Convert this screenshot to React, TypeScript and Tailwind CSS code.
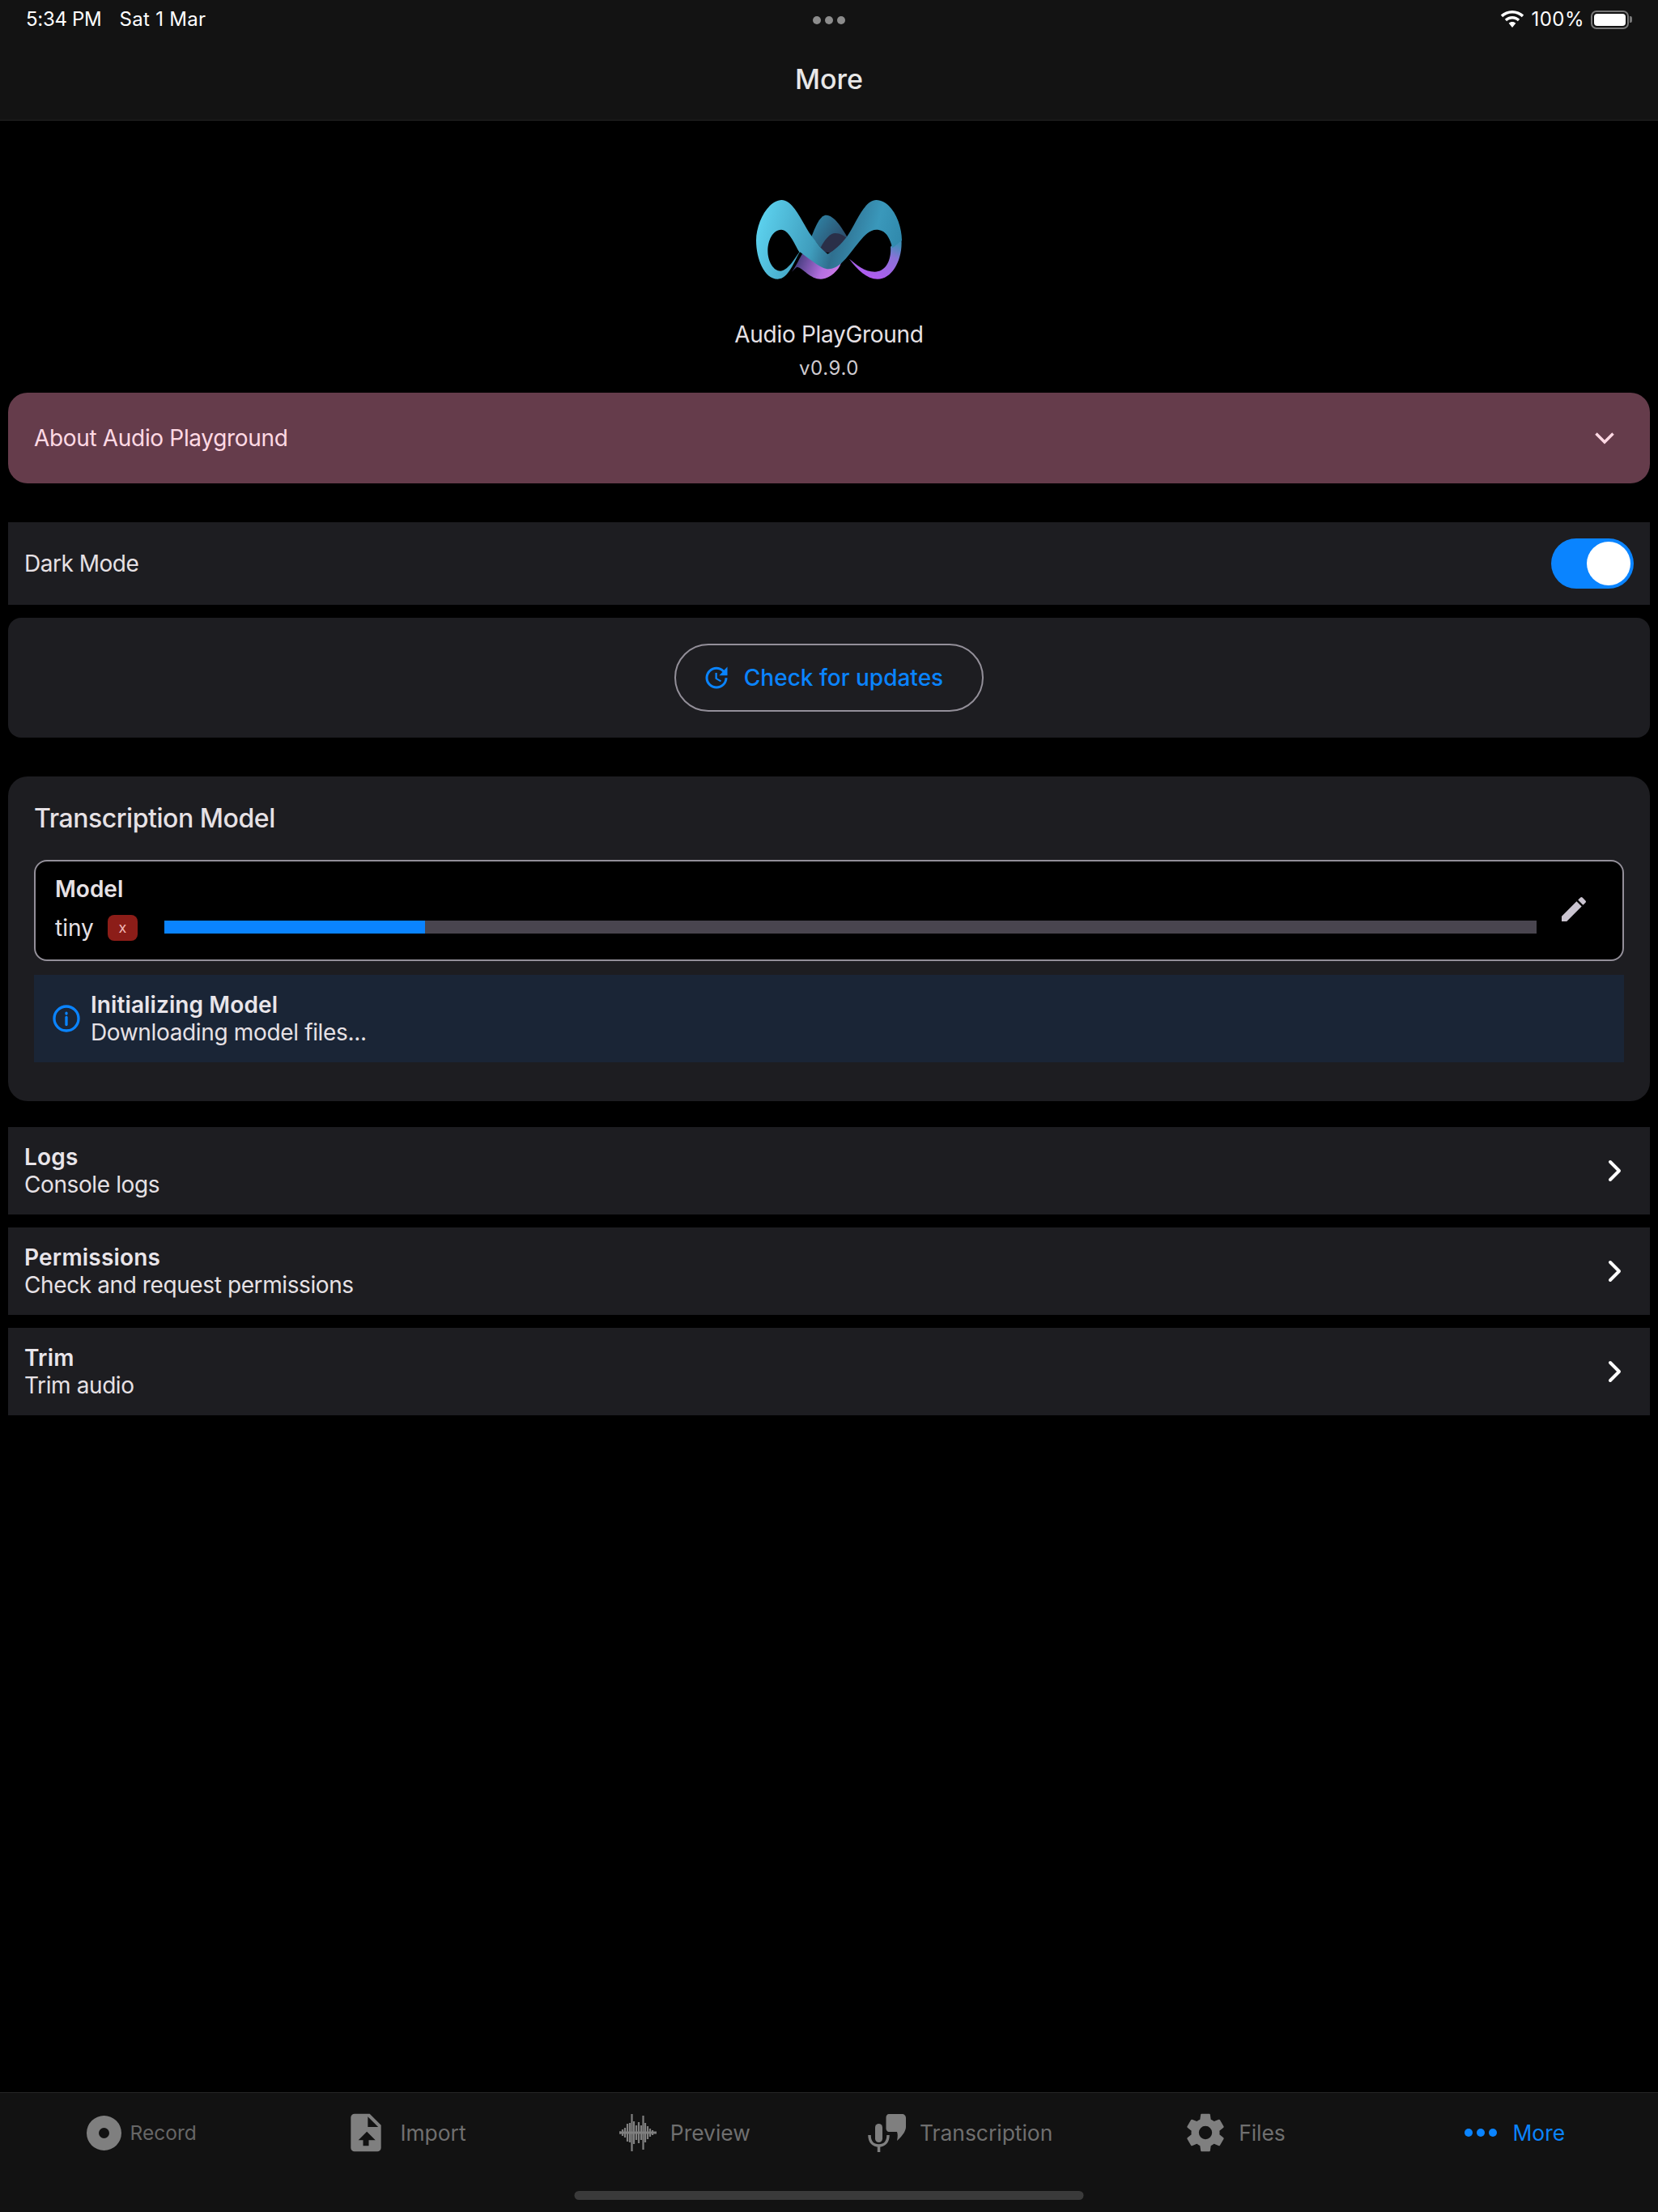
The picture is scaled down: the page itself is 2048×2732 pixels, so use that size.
import React from "react";

const font = { fontFamily: "Inter, 'Noto Sans', sans-serif" };

function Logo() {
  return (
    <svg width="180" height="98" viewBox="210 112 540 294" className="block">
      <defs>
        <linearGradient id="lg1" x1="210" y1="150" x2="750" y2="300" gradientUnits="userSpaceOnUse">
          <stop offset="0" stopColor="#5fd6f2" />
          <stop offset="0.42" stopColor="#3f9dbd" />
          <stop offset="0.56" stopColor="#2f6f8f" />
          <stop offset="0.8" stopColor="#3a98bb" />
          <stop offset="1" stopColor="#2f87aa" />
        </linearGradient>
        <linearGradient id="lg2" x1="360" y1="320" x2="560" y2="400" gradientUnits="userSpaceOnUse">
          <stop offset="0" stopColor="#3e3a78" />
          <stop offset="0.5" stopColor="#b56fe0" />
          <stop offset="1" stopColor="#e083ee" />
        </linearGradient>
        <linearGradient id="lg3" x1="700" y1="260" x2="640" y2="400" gradientUnits="userSpaceOnUse">
          <stop offset="0" stopColor="#3f8fb8" />
          <stop offset="0.35" stopColor="#8a72d8" />
          <stop offset="1" stopColor="#b05cf0" />
        </linearGradient>
        <linearGradient id="lg4" x1="420" y1="180" x2="540" y2="260" gradientUnits="userSpaceOnUse">
          <stop offset="0" stopColor="#2f86a8" />
          <stop offset="1" stopColor="#2c4a68" />
        </linearGradient>
      </defs>
      <path d="M415 248C432 205 448 168 470 168C498 168 528 215 548 250L500 300L450 290Z" fill="url(#lg4)" />
      <path d="M447 292C462 262 482 235 503 235C522 235 536 245 546 254L500 310L460 305Z" fill="#2a2f48" />
      <path d="M342 378C358 358 372 325 385 305L470 350L525 345C515 375 480 405 450 405C410 405 385 365 362 360C356 362 350 372 342 378Z" fill="url(#lg2)" />
      <path d="M555 330C580 350 610 378 650 378C690 378 712 335 708 285L748 255C755 330 715 405 660 405C620 405 585 370 555 330Z" fill="url(#lg3)" />
      <path fillRule="evenodd" d="M305 112C350 112 385 205 415 245C435 270 450 295 475 312C500 300 525 275 545 250C580 200 610 112 655 112C710 112 750 195 750 262L715 290C705 250 690 222 655 222C610 222 575 300 525 347C505 365 480 375 455 362C425 347 395 320 372 305C350 340 330 405 290 405C240 405 210 330 210 262C210 195 255 112 305 112ZM303 222C270 222 253 265 253 300C253 340 275 375 300 375C325 375 350 335 370 305C350 270 330 222 303 222Z" fill="url(#lg1)" />
    </svg>
  );
}

function Row({ title, sub }: { title: string; sub: string }) {
  return (
    <div className="flex h-[108px] items-center justify-between bg-[#1d1d21] pl-[20px] pr-[28px]">
      <div className="flex flex-col">
        <span className="text-[28px] font-semibold leading-[34px] tracking-[0.2px] text-[#e9e5ea]">{title}</span>
        <span className="text-[28px] leading-[34px] tracking-[-0.4px] text-[#e6e1e5]">{sub}</span>
      </div>
      <svg width="32" height="32" viewBox="0 0 32 32" fill="none" stroke="#ffffff" strokeWidth="4" strokeLinecap="round" strokeLinejoin="round">
        <path d="M11 5L22 16L11 27" />
      </svg>
    </div>
  );
}

function Tab({ icon, label, active, dim, ml }: { icon: React.ReactNode; label: string; active?: boolean; dim?: boolean; ml: string }) {
  return (
    <div className={`flex w-[341.33px] shrink-0 items-center justify-center pb-[4px] ${ml}`}>
      {icon}
      <span className={`leading-[32px] ${active ? "text-[26.4px] text-[#0a84ff]" : dim ? "text-[24.5px] text-[#666666]" : "text-[26.4px] text-[#6f6f6f]"}`}>{label}</span>
    </div>
  );
}

const waveBars: [number, number][] = [
  [1, 3], [4, 8], [7, 12], [10, 22], [13, 24], [15.5, 46], [18, 28], [21, 18], [24, 26], [27, 18], [29.5, 42], [32, 24], [35, 16], [38, 10], [41, 6], [44, 2],
];

export default function App() {
  return (
    <div style={font} className="flex h-[2732px] w-[2048px] flex-col overflow-hidden bg-black text-white">
      <header className="relative h-[149px] shrink-0 border-b border-[#242424] bg-[#131313]">
        <div className="flex h-[48px] items-center justify-between pl-[32px] pr-[32px]">
          <div className="flex gap-[22px] text-[24px] leading-[28px] text-white">
            <span className="tracking-[-0.3px]">5:34 PM</span>
            <span className="tracking-[0.3px]">Sat 1 Mar</span>
          </div>
          <div className="flex items-center gap-[8px]">
            <svg width="30" height="22" viewBox="0 0 30 22" fill="#fff">
              <path d="M15 0C9.5 0 4.5 2.1 0.8 5.6L3.2 8.2C6.3 5.3 10.4 3.5 15 3.5S23.7 5.3 26.8 8.2L29.2 5.6C25.5 2.1 20.5 0 15 0Z" />
              <path d="M15 7C11.4 7 8.2 8.4 5.8 10.7L8.2 13.2C9.9 11.5 12.3 10.5 15 10.5S20.1 11.5 21.8 13.2L24.2 10.7C21.8 8.4 18.6 7 15 7Z" />
              <path d="M15 14C13.3 14 11.8 14.7 10.7 15.7L15 21L19.3 15.7C18.2 14.7 16.7 14 15 14Z" />
            </svg>
            <span className="text-[24px] leading-[28px] tracking-[0.5px] text-white">100%</span>
            <div className="flex items-center">
              <div className="h-[23px] w-[47px] rounded-[7px] border-2 border-[#777777] p-[2px]">
                <div className="h-full w-full rounded-[4px] bg-white" />
              </div>
              <div className="ml-[1px] h-[8px] w-[3px] rounded-r-[2px] bg-[#777777]" />
            </div>
          </div>
        </div>
        <div className="absolute left-1/2 top-[20px] flex -translate-x-1/2 gap-[5px]">
          <div className="h-[10px] w-[10px] rounded-full bg-[#8c8c8c]" />
          <div className="h-[10px] w-[10px] rounded-full bg-[#8c8c8c]" />
          <div className="h-[10px] w-[10px] rounded-full bg-[#8c8c8c]" />
        </div>
        <div className="mt-[30px] text-center text-[34px] font-medium leading-[40px] text-[#e8e8e8]">More</div>
      </header>

      <main className="flex flex-1 flex-col px-[10px]">
        <div className="flex flex-col items-center pt-[98px]">
          <Logo />
          <div className="mt-[50px] text-[28px] leading-[36px] tracking-[-0.3px] text-[#e6e1e5]">Audio PlayGround</div>
          <div className="mt-[6px] text-[24px] leading-[36px] tracking-[0.6px] text-[#cfcbd0]">v0.9.0</div>
        </div>

        <div className="mt-[12px] flex h-[112px] items-center justify-between rounded-[24px] bg-[#653c4b] pl-[32px] pr-[44px]">
          <span className="text-[28px] tracking-[-0.33px] text-[#ffd9e4]">About Audio Playground</span>
          <svg width="24" height="16" viewBox="0 0 24 16" fill="none" stroke="#ffd9e4" strokeWidth="3.5">
            <path d="M1.5 2.5L12 13L22.5 2.5" />
          </svg>
        </div>

        <div className="mt-[48px] flex h-[102px] items-center justify-between bg-[#1d1d21] pl-[20px] pr-[20px]">
          <span className="text-[28px] tracking-[-0.5px] text-[#e6e1e5]">Dark Mode</span>
          <div className="flex h-[62px] w-[102px] items-center justify-end rounded-full bg-[#0a84ff] pr-[4px]">
            <div className="h-[54px] w-[54px] rounded-full bg-white" />
          </div>
        </div>

        <div className="mt-[16px] flex h-[148px] items-center justify-center rounded-[16px] bg-[#1d1d21]">
          <div className="flex h-[84px] w-[382px] items-center justify-center gap-[16px] rounded-full border-2 border-[#938f99] pr-[16px]">
            <svg width="36" height="36" viewBox="0 0 24 24" fill="#0a84ff">
              <path d="M21,10.12H14.22L16.96,7.3C14.23,4.6 9.81,4.5 7.08,7.2C4.35,9.91 4.35,14.28 7.08,17C9.81,19.7 14.23,19.7 16.96,17C18.32,15.65 19,14.08 19,12.1H21C21,14.08 20.12,16.65 18.36,18.39C14.85,21.87 9.15,21.87 5.64,18.39C2.14,14.92 2.11,9.28 5.62,5.81C9.13,2.34 14.76,2.34 18.27,5.81L21,3V10.12M12.5,8V12.25L16,14.33L15.28,15.54L11,13V8H12.5Z" />
            </svg>
            <span className="text-[28px] font-medium text-[#0a84ff]">Check for updates</span>
          </div>
        </div>

        <div className="mt-[48px] flex h-[401px] flex-col rounded-[24px] bg-[#1d1d21] px-[32px] pt-[32px]">
          <div className="text-[32px] font-medium leading-[40px] tracking-[-0.45px] text-[#e6e1e5]">Transcription Model</div>
          <div className="mt-[31px] flex h-[125px] items-center rounded-[16px] border-2 border-[#938f99] bg-black pl-[24px] pr-[40px]">
            <div className="flex flex-1 flex-col pb-[6px]">
              <span className="text-[28px] font-semibold leading-[34px] text-[#e6e1e5]">Model</span>
              <div className="mt-[15px] flex items-center">
                <span className="text-[28px] leading-[32px] text-[#e6e1e5]">tiny</span>
                <span className="ml-[17px] flex h-[32px] w-[37px] items-center justify-center rounded-[8px] bg-[#8c1d18] text-[18px] leading-[18px] text-[#f2b8b5]">x</span>
                <div className="-mt-[2px] ml-[33px] flex h-[16px] flex-1 bg-[#49454f]">
                  <div className="h-full w-[19%] bg-[#0a84ff]" />
                </div>
              </div>
            </div>
            <svg className="-mt-[4px] ml-[26px] shrink-0" width="40" height="40" viewBox="0 0 24 24" fill="#cac4d0">
              <path d="M3 17.25V21h3.75L17.81 9.94l-3.75-3.75L3 17.25zM20.71 7.04a1 1 0 0 0 0-1.41l-2.34-2.34a1 1 0 0 0-1.41 0l-1.83 1.83 3.75 3.75 1.83-1.83z" />
            </svg>
          </div>
          <div className="mt-[17px] flex h-[108px] items-center bg-[#1a2536] pl-[22px]">
            <svg width="36" height="36" viewBox="0 0 24 24" fill="none" stroke="#0a84ff" strokeWidth="2.2" strokeLinecap="round">
              <circle cx="12" cy="12" r="10" />
              <path d="M12 11v6" />
              <path d="M12 7.5v.5" />
            </svg>
            <div className="ml-[12px] flex flex-col">
              <span className="text-[28px] font-semibold leading-[34px] tracking-[0.1px] text-[#e9e5ea]">Initializing Model</span>
              <span className="text-[28px] leading-[34px] tracking-[-0.35px] text-[#e6e1e5]">Downloading model files...</span>
            </div>
          </div>
        </div>

        <div className="mt-[32px] flex flex-col gap-[16px]">
          <Row title="Logs" sub="Console logs" />
          <Row title="Permissions" sub="Check and request permissions" />
          <Row title="Trim" sub="Trim audio" />
        </div>
      </main>

      <footer className="relative h-[148px] shrink-0 border-t border-[#262626] bg-[#121212]">
        <div className="flex h-[102px] items-center">
          <Tab
            ml="pl-[8px]"
            dim
            label="Record"
            icon={
              <svg className="mr-[11px]" width="43" height="43" viewBox="0 0 43 43">
                <path fillRule="evenodd" fill="#7f7f7f" d="M21.5 0a21.5 21.5 0 1 0 0 43a21.5 21.5 0 1 0 0-43ZM21.5 15a6.5 6.5 0 1 1 0 13a6.5 6.5 0 1 1 0-13Z" />
              </svg>
            }
          />
          <Tab
            ml="pr-[24px]"
            label="Import"
            icon={
              <svg className="mr-[14px]" width="56" height="56" viewBox="0 0 24 24" fill="#7f7f7f">
                <path d="M14,2H6A2,2 0 0,0 4,4V20A2,2 0 0,0 6,22H18A2,2 0 0,0 20,20V8L14,2M13.5,16V19H10.5V16H8L12.5,11.5L17,16H13.5M13,9V3.5L18.5,9H13Z" />
              </svg>
            }
          />
          <Tab
            ml="pr-[15px]"
            label="Preview"
            icon={
              <svg className="mr-[17px]" width="46" height="46" viewBox="0 0 46 46" fill="#7f7f7f">
                {waveBars.map(([x, h]) => (
                  <rect key={x} x={x - 1.1} y={23 - h / 2} width="2.2" height={h} />
                ))}
                <rect x="0" y="21.5" width="46" height="3" />
              </svg>
            }
          />
          <Tab
            ml="pr-[17px]"
            label="Transcription"
            icon={
              <svg className="mr-[17px]" width="47" height="47" viewBox="0 0 47 47">
                <rect x="9" y="12" width="9" height="23" rx="4.5" fill="#7f7f7f" />
                <path d="M2 26C2 35 7 39 13.5 39C20 39 25 35 25 26" fill="none" stroke="#7f7f7f" strokeWidth="3.5" />
                <rect x="11.8" y="38" width="3.5" height="9" fill="#7f7f7f" />
                <path d="M26 0H42C45 0 47 2 47 5V16C47 20 44 26 36 33C37 28 37 25 36 22H26C24 22 22.5 20 22.5 18V4C22.5 2 24 0 26 0Z" fill="#7f7f7f" />
              </svg>
            }
          />
          <Tab
            ml="pr-[23px]"
            label="Files"
            icon={
              <svg className="mr-[13px]" width="56" height="56" viewBox="0 0 24 24" fill="#7f7f7f">
                <path d="M12,15.5A3.5,3.5 0 0,1 8.5,12A3.5,3.5 0 0,1 12,8.5A3.5,3.5 0 0,1 15.5,12A3.5,3.5 0 0,1 12,15.5M19.43,12.97C19.47,12.65 19.5,12.33 19.5,12C19.5,11.67 19.47,11.34 19.43,11L21.54,9.37C21.73,9.22 21.78,8.95 21.66,8.73L19.66,5.27C19.54,5.05 19.27,4.96 19.05,5.05L16.56,6.05C16.04,5.66 15.5,5.32 14.87,5.07L14.5,2.42C14.46,2.18 14.25,2 14,2H10C9.75,2 9.54,2.18 9.5,2.42L9.13,5.07C8.5,5.32 7.96,5.66 7.44,6.05L4.95,5.05C4.73,4.96 4.46,5.05 4.34,5.27L2.34,8.73C2.21,8.95 2.27,9.22 2.46,9.37L4.57,11C4.53,11.34 4.5,11.67 4.5,12C4.5,12.33 4.53,12.65 4.57,12.97L2.46,14.63C2.27,14.78 2.21,15.05 2.34,15.27L4.34,18.73C4.46,18.95 4.73,19.03 4.95,18.95L7.44,17.94C7.96,18.34 8.5,18.68 9.13,18.93L9.5,21.58C9.54,21.82 9.75,22 10,22H14C14.25,22 14.46,21.82 14.5,21.58L14.87,18.93C15.5,18.67 16.04,18.34 16.56,17.94L19.05,18.95C19.27,19.03 19.54,18.95 19.66,18.73L21.66,15.27C21.78,15.05 21.73,14.78 21.54,14.63L19.43,12.97Z" />
              </svg>
            }
          />
          <Tab
            ml="pr-[13px]"
            active
            label="More"
            icon={
              <div className="mr-[20px] flex gap-[5px]">
                <div className="h-[10px] w-[10px] rounded-full bg-[#0a84ff]" />
                <div className="h-[10px] w-[10px] rounded-full bg-[#0a84ff]" />
                <div className="h-[10px] w-[10px] rounded-full bg-[#0a84ff]" />
              </div>
            }
          />
        </div>
        <div className="absolute bottom-[15px] left-1/2 h-[11px] w-[629px] -translate-x-1/2 rounded-full bg-[#3a3a3a]" />
      </footer>
    </div>
  );
}
